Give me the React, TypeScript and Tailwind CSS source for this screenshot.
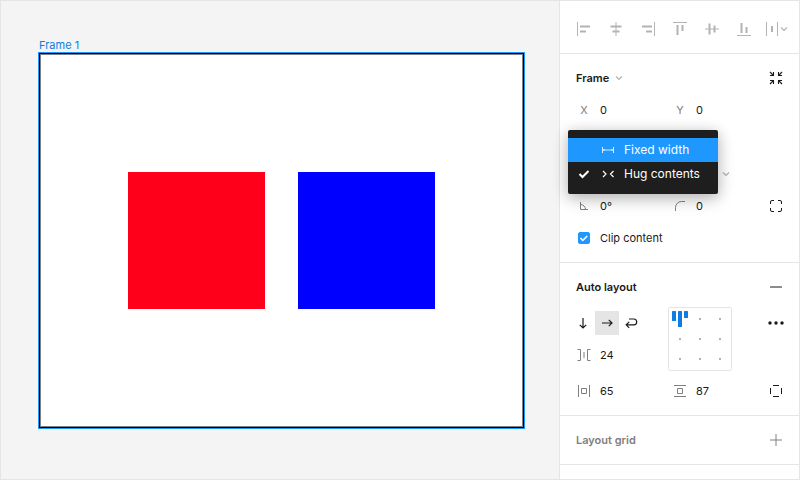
import { useState, type ReactNode } from 'react';
import clsx from 'clsx';

type IconProps = { children: ReactNode; className?: string };

function Icon({ children, className }: IconProps) {
    return (
        <svg
            viewBox="0 0 32 32"
            fill="none"
            stroke="currentColor"
            aria-hidden="true"
            className={clsx('size-8 shrink-0', className)}
        >
            {children}
        </svg>
    );
}

const alignActions = [
    {
        label: 'Align left',
        icon: (
            <>
                <path d="M9.5 9v14" />
                <path d="M12 13.5h10M12 18.5h6" strokeWidth="2" />
            </>
        ),
    },
    {
        label: 'Align horizontal centers',
        icon: (
            <>
                <path d="M16 9v14" />
                <path d="M10.5 13.5h11M12.5 18.5h7" strokeWidth="2" />
            </>
        ),
    },
    {
        label: 'Align right',
        icon: (
            <>
                <path d="M22.5 9v14" />
                <path d="M10 13.5h10M14 18.5h6" strokeWidth="2" />
            </>
        ),
    },
    {
        label: 'Align top',
        icon: (
            <>
                <path d="M9 9.5h14" />
                <path d="M13.5 12v10M18.5 12v6" strokeWidth="2" />
            </>
        ),
    },
    {
        label: 'Align vertical centers',
        icon: (
            <>
                <path d="M9 16h14" />
                <path d="M13.5 10.5v11M18.5 12.5v7" strokeWidth="2" />
            </>
        ),
    },
    {
        label: 'Align bottom',
        icon: (
            <>
                <path d="M9 22.5h14" />
                <path d="M13.5 10v10M18.5 14v6" strokeWidth="2" />
            </>
        ),
    },
    {
        label: 'Distribute',
        icon: (
            <>
                <path d="M6.5 9v14M17.5 9v14" />
                <path d="M12 13v6" strokeWidth="2" />
                <path d="M21 14.5l3 3 3-3" strokeWidth="1.2" />
            </>
        ),
    },
];

const directions = [
    { label: 'Vertical', path: 'M16 11v10M12.8 17.8L16 21l3.2-3.2' },
    { label: 'Horizontal', path: 'M11 16h10M17.8 12.8L21 16l-3.2 3.2' },
    { label: 'Wrap', path: 'M14 12h4.8a2.9 2.9 0 0 1 0 5.8H11.5M14.2 14.8l-3 3 3 3' },
];

function Caret({ className }: { className?: string }) {
    return (
        <svg
            viewBox="0 0 8 8"
            fill="none"
            stroke="currentColor"
            strokeWidth="1.2"
            aria-hidden="true"
            className={clsx('size-2', className)}
        >
            <path d="M1 2.5l3 3 3-3" />
        </svg>
    );
}

function Field({ label, value, icon }: { label: string; value: string; icon: ReactNode }) {
    const [text, setText] = useState(value);
    return (
        <label className="flex h-8 items-center">
            <span className="flex w-8 shrink-0 justify-center text-[#808080]">{icon}</span>
            <input
                aria-label={label}
                className="w-12 min-w-0 bg-transparent outline-none"
                value={text}
                onChange={e => setText(e.target.value)}
            />
        </label>
    );
}

function IconButton({ label, children, className }: IconProps & { label: string }) {
    return (
        <button type="button" aria-label={label} className={clsx('size-8', className)}>
            <Icon>{children}</Icon>
        </button>
    );
}

function ResizeMenu() {
    return (
        <div
            role="menu"
            className="absolute top-1 left-0 z-10 w-[150px] rounded-xs bg-[#1e1e1e] py-2 text-xs text-white shadow-[0_2px_14px_rgba(0,0,0,0.15),0_5px_17px_rgba(0,0,0,0.2)]"
        >
            <button
                type="button"
                role="menuitemradio"
                aria-checked="false"
                className="flex h-6 w-full items-center bg-[#1e98ff] pl-6"
            >
                <Icon>
                    <path
                        d="M10.5 13v6M21.5 13v6M11 16h10M12.5 15L11.5 16l1 1M19.5 15l1 1-1 1"
                        strokeOpacity="0.8"
                    />
                </Icon>
                Fixed width
            </button>
            <button
                type="button"
                role="menuitemradio"
                aria-checked="true"
                className="flex h-6 w-full items-center"
            >
                <Icon className="-mr-2">
                    <path d="M11.5 16l3 3 6-6" strokeWidth="2" />
                </Icon>
                <Icon>
                    <path d="M11 13l3 3-3 3M21.5 13l-3 3 3 3" strokeWidth="1.2" />
                </Icon>
                Hug contents
            </button>
        </div>
    );
}

function AlignmentGrid() {
    return (
        <div className="grid size-16 grid-cols-3 grid-rows-3 place-items-center rounded-xs border border-[#e5e5e5] p-px">
            <svg viewBox="0 0 20 20" className="size-5 text-[#0d7de4]" fill="currentColor" aria-hidden="true">
                <rect x="2" y="2" width="4" height="10" rx="0.5" />
                <rect x="8" y="2" width="4" height="16" rx="0.5" />
                <rect x="14" y="2" width="4" height="7" rx="0.5" />
            </svg>
            {Array.from({ length: 8 }, (_, i) => (
                <span key={i} className="size-0.5 bg-[#b3b3b3]" />
            ))}
        </div>
    );
}

function FrameSection() {
    const [clip, setClip] = useState(true);
    return (
        <section className="border-b border-[#e5e5e5] py-2 pl-2">
            <div className="grid grid-cols-[96px_96px_32px]">
                <h2 className="col-span-2 flex items-center gap-1.5 pl-2 font-semibold">
                    Frame
                    <Caret className="text-[#b3b3b3]" />
                </h2>
                <IconButton label="Resize to fit">
                    <path
                        d="M10 10l3.5 3.5M13.5 10v3.5H10M22 10l-3.5 3.5M18.5 10v3.5H22M10 22l3.5-3.5M13.5 22v-3.5H10M22 22l-3.500-3.500M18.5 22v-3.5H22"
                        strokeWidth="1.1"
                    />
                </IconButton>
                <Field label="X" value="0" icon="X" />
                <Field label="Y" value="0" icon="Y" />
            </div>
            <div className="relative h-16 pt-8">
                <button
                    type="button"
                    aria-label="Resizing"
                    className="flex h-8 w-[162px] items-center justify-end text-[#b3b3b3]"
                >
                    <Caret />
                </button>
                <ResizeMenu />
            </div>
            <div className="grid grid-cols-[96px_96px_32px]">
                <Field
                    label="Rotation"
                    value="0°"
                    icon={
                        <Icon>
                            <path d="M12.5 12v7.5H20M12.5 14.5a5 5 0 0 1 5 5" />
                        </Icon>
                    }
                />
                <Field
                    label="Corner radius"
                    value="0"
                    icon={
                        <Icon>
                            <path d="M11.5 21v-3.5a6 6 0 0 1 6-6H21" />
                        </Icon>
                    }
                />
                <IconButton label="Independent corners">
                    <path d="M10.5 14v-2a1.5 1.5 0 0 1 1.5-1.5h2M18 10.5h2a1.5 1.5 0 0 1 1.5 1.5v2M21.5 18v2a1.5 1.5 0 0 1-1.5 1.5h-2M14 21.5h-2a1.5 1.5 0 0 1-1.5-1.5v-2" />
                </IconButton>
            </div>
            <label className="flex h-8 items-center">
                <span className="grid w-8 place-items-center text-white">
                    <input
                        type="checkbox"
                        checked={clip}
                        onChange={e => setClip(e.target.checked)}
                        className="col-start-1 row-start-1 size-3 appearance-none rounded-xs border border-[#1e98ff] checked:bg-[#1e98ff]"
                    />
                    {clip && (
                        <svg
                            viewBox="0 0 12 12"
                            fill="none"
                            stroke="currentColor"
                            strokeWidth="1.6"
                            aria-hidden="true"
                            className="pointer-events-none col-start-1 row-start-1 size-3"
                        >
                            <path d="M2.5 6l2.3 2.3L9.2 4" />
                        </svg>
                    )}
                </span>
                Clip content
            </label>
        </section>
    );
}

function DirectionButtons() {
    const [direction, setDirection] = useState('Horizontal');
    return (
        <div className="flex h-8 items-center pl-[3px]">
            {directions.map(({ label, path }) => (
                <button
                    key={label}
                    type="button"
                    aria-label={label}
                    aria-pressed={direction === label}
                    onClick={() => setDirection(label)}
                    className="size-6 aria-pressed:bg-[#e5e5e5]"
                >
                    <svg
                        viewBox="4 4 24 24"
                        fill="none"
                        stroke="currentColor"
                        strokeWidth="1.2"
                        aria-hidden="true"
                        className="size-6"
                    >
                        <path d={path} />
                    </svg>
                </button>
            ))}
        </div>
    );
}

function AutoLayoutSection() {
    return (
        <section className="border-b border-[#e5e5e5] py-2 pl-2">
            <div className="grid grid-cols-[192px_32px]">
                <h2 className="flex items-center pl-2 font-semibold">Auto layout</h2>
                <IconButton label="Remove auto layout">
                    <path d="M10 16h12" />
                </IconButton>
            </div>
            <div className="grid grid-cols-[96px_96px_32px] py-1">
                <div>
                    <DirectionButtons />
                    <Field
                        label="Spacing between items"
                        value="24"
                        icon={
                            <Icon>
                                <path d="M9.5 10.5h3v11h-3M22.5 10.5h-3v11h3M16 13v6" />
                            </Icon>
                        }
                    />
                </div>
                <div className="pl-1">
                    <AlignmentGrid />
                </div>
                <IconButton label="Advanced layout">
                    <g fill="currentColor" stroke="none">
                        <circle cx="10" cy="16" r="1.7" />
                        <circle cx="16" cy="16" r="1.7" />
                        <circle cx="22" cy="16" r="1.7" />
                    </g>
                </IconButton>
            </div>
            <div className="grid grid-cols-[96px_96px_32px]">
                <Field
                    label="Horizontal padding"
                    value="65"
                    icon={
                        <Icon>
                            <path d="M10.5 10v12M21.5 10v12M13.5 13.5h5v5h-5z" />
                        </Icon>
                    }
                />
                <Field
                    label="Vertical padding"
                    value="87"
                    icon={
                        <Icon>
                            <path d="M10 10.5h12M10 21.5h12M13.5 13.5h5v5h-5z" />
                        </Icon>
                    }
                />
                <IconButton label="Independent padding">
                    <path d="M13 10.5h6M13 21.5h6M10.5 13v6M21.5 13v6" />
                </IconButton>
            </div>
        </section>
    );
}

export default function App() {
    return (
        <div className="flex h-screen border border-[#e5e5e5] bg-[#f4f4f4] font-['Inter',sans-serif] text-[11px] leading-4 text-[#1a1a1a]">
            <main className="flex min-w-0 flex-1 flex-col pt-[37px] pr-[34px] pb-[50px] pl-[37px]">
                <div className="pl-px leading-[14px] text-[#0d7de4]">Frame 1</div>
                <div className="flex flex-1 items-center justify-center gap-[33px] border border-[#1e98ff] bg-white shadow-[inset_0_0_0_1px_#000,inset_0_0_0_2px_#808080]">
                    <div className="size-[137px] bg-[#ff001a]" />
                    <div className="size-[137px] bg-[#0000ff]" />
                </div>
            </main>
            <aside className="w-60 shrink-0 border-l border-[#e5e5e5] bg-white">
                <div className="flex h-[53px] items-center border-b border-[#e5e5e5] pt-1 pl-2 text-[#b3b3b3]">
                    {alignActions.map(action => (
                        <IconButton key={action.label} label={action.label}>
                            {action.icon}
                        </IconButton>
                    ))}
                </div>
                <FrameSection />
                <AutoLayoutSection />
                <section className="grid grid-cols-[192px_32px] border-b border-[#e5e5e5] py-2 pl-2 text-[#808080]">
                    <h2 className="flex items-center pl-2 font-semibold">Layout grid</h2>
                    <IconButton label="Add layout grid">
                        <path d="M10 16h12M16 10v12" />
                    </IconButton>
                </section>
            </aside>
        </div>
    );
}
